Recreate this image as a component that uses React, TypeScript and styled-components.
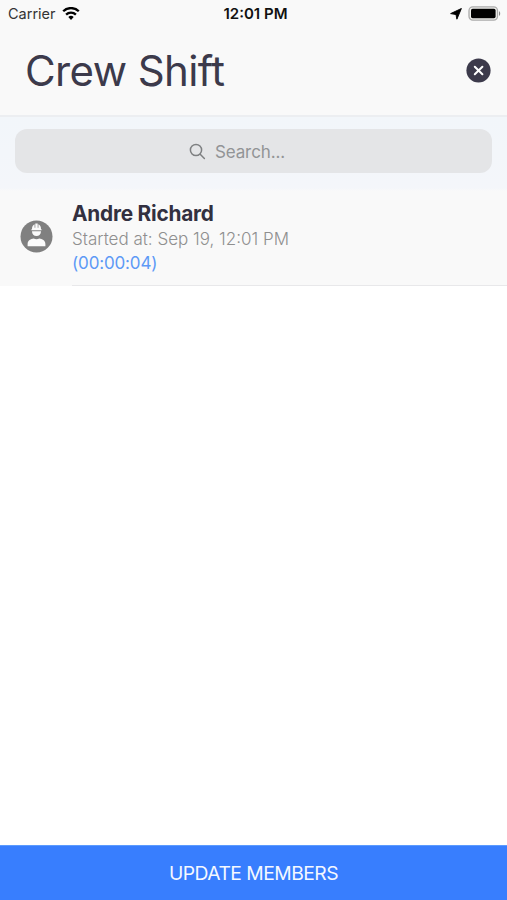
import React from 'react';
import styled, { createGlobalStyle } from 'styled-components';

const GlobalStyle = createGlobalStyle`
  * { box-sizing: border-box; }
  body { margin: 0; background: #fff; font-family: Inter, "Liberation Sans", sans-serif; }
`;

const Screen = styled.main`
  display: flex;
  flex-direction: column;
  height: 100vh;
  background: #fff;
`;

const Header = styled.header`
  height: 117px;
  background: #f9f9f9;
  border-bottom: 2px solid #eceef1;
`;

const StatusBar = styled.div`
  display: grid;
  grid-template-columns: 1fr auto 1fr;
  align-items: center;
  height: 28px;
  padding: 0 6px 0 8px;
  color: #111;
`;

const StatusGroup = styled.div<{ $end?: boolean }>`
  display: flex;
  align-items: center;
  justify-content: ${(p) => (p.$end ? 'flex-end' : 'flex-start')};
  gap: 6px;
`;

const Carrier = styled.span`
  font-size: 14.5px;
  line-height: 20px;
  color: #333;
`;

const Clock = styled.span`
  margin-left: 2px;
  font-size: 15px;
  line-height: 20px;
  font-weight: 600;
`;

const TitleBar = styled.div`
  display: flex;
  align-items: center;
  justify-content: space-between;
  height: 84px;
  padding: 0 16px 0 25px;
`;

const Title = styled.h1`
  margin: 2px 0 0;
  font-size: 42px;
  line-height: 50px;
  font-weight: 400;
  letter-spacing: -0.6px;
  color: #3c3a4b;
`;

const IconButton = styled.button`
  display: flex;
  padding: 0;
  border: 0;
  background: none;
`;

const SearchBar = styled.section`
  height: 74px;
  padding: 12px 15px;
  background: linear-gradient(#f2f6fa, #f4f6fa 96%, #f9f9f9);
`;

const SearchField = styled.div`
  display: flex;
  align-items: center;
  justify-content: center;
  gap: 9px;
  height: 44px;
  padding-right: 33px;
  border-radius: 12px;
  background: #e4e5e7;
`;

const Placeholder = styled.span`
  padding-top: 1px;
  font-size: 17px;
  line-height: 24px;
  letter-spacing: -0.1px;
  color: #929496;
`;

const MemberRow = styled.article`
  display: flex;
  height: 95px;
  padding-left: 20px;
  background: #f9f9f9;
`;

const Avatar = styled.svg`
  flex: none;
  margin: 29px 19px 0 0;
`;

const MemberInfo = styled.div`
  flex: 1;
  padding-top: 10px;
  border-bottom: 1px solid #e8e8ea;
`;

const MemberName = styled.h2`
  margin: 0;
  font-size: 20.8px;
  line-height: 26px;
  font-weight: 700;
  letter-spacing: -0.22px;
  color: #323040;
`;

const Started = styled.p`
  margin: 0;
  font-size: 17px;
  line-height: 24px;
  font-weight: 300;
  color: #8f8f8f;
`;

const Elapsed = styled.p`
  margin: 0;
  font-size: 17px;
  line-height: 24px;
  letter-spacing: -0.15px;
  color: #5d99f6;
`;

const UpdateButton = styled.button`
  height: 55px;
  margin-top: auto;
  padding: 0;
  border: 0;
  border-top: 1px solid #5b9bff;
  background: #387efe;
  color: #f4f8ff;
  font: 400 19.3px/54px Inter, "Liberation Sans", sans-serif;
  letter-spacing: -0.53px;
`;

const WifiIcon = () => (
  <svg width="18" height="14" viewBox="0 0 18 14" fill="none" stroke="#000" strokeWidth="2.3">
    <path d="M1.2 4.3a11 11 0 0 1 15.6 0" />
    <path d="M4.1 7.6a6.9 6.9 0 0 1 9.8 0" />
    <path d="M9 12.9 6.3 10.1a3.8 3.8 0 0 1 5.4 0Z" fill="#000" stroke="none" />
  </svg>
);

const LocationIcon = () => (
  <svg width="12" height="12" viewBox="0 0 12 12">
    <path d="M11.4.5 6.9 11.2 6 6.6.6 5.6Z" fill="#000" stroke="#000" strokeWidth=".9" strokeLinejoin="round" />
  </svg>
);

const BatteryIcon = () => (
  <svg width="33" height="16" viewBox="0 0 33 16">
    <rect x="1" y=".9" width="28.5" height="13.2" rx="3.8" fill="#f1f1ee" stroke="#aaa" strokeWidth="1.3" />
    <rect x="3" y="2.8" width="24.6" height="9.4" rx="1.6" fill="#000" />
    <path d="M31 5.3c1.6.6 1.6 4 0 4.7Z" fill="#888" />
  </svg>
);

const CloseIcon = () => (
  <svg width="25" height="25" viewBox="0 0 25 25">
    <circle cx="12.5" cy="12.5" r="12.1" fill="#3c3a4b" />
    <path d="m8.8 8.7 7.6 7.6m0-7.6-7.6 7.6" stroke="#fff" strokeWidth="2" strokeLinecap="round" />
  </svg>
);

const SearchIcon = () => (
  <svg width="17" height="17" viewBox="0 0 17 17" fill="none" stroke="#7e8082" strokeWidth="1.5" strokeLinecap="round">
    <circle cx="7" cy="7" r="5.6" />
    <path d="m11.2 11.2 4.2 4.3" />
  </svg>
);

const WorkerAvatar = () => (
  <Avatar width="33" height="33" viewBox="0 0 33 33">
    <circle cx="16.5" cy="16.5" r="16" fill="#808080" />
    <g fill="#fafafa">
      <path d="M12 9c0-2.4 1-4 2.6-4.7v3.5h.7V3.6h2.4v4.2h.7V4.3C20 5 21 6.6 21 9l.6.4v.9H11.400v-.9Z" />
      <path d="M12 11.300h9c0 3-1.800 4.700-4.500 4.700S12 14.300 12 11.300Z" />
      <path d="M7.600 26.300v-2.100c0-3.700 3.200-5.400 6.100-5.600 1.700.7 3.900.7 5.600 0 2.900.2 6.100 1.900 6.100 5.600v2.100Z" />
    </g>
  </Avatar>
);

export default function App() {
  return (
    <Screen>
      <GlobalStyle />
      <Header>
        <StatusBar>
          <StatusGroup>
            <Carrier>Carrier</Carrier>
            <WifiIcon />
          </StatusGroup>
          <Clock>12:01 PM</Clock>
          <StatusGroup $end>
            <LocationIcon />
            <BatteryIcon />
          </StatusGroup>
        </StatusBar>
        <TitleBar>
          <Title>Crew Shift</Title>
          <IconButton aria-label="Close">
            <CloseIcon />
          </IconButton>
        </TitleBar>
      </Header>
      <SearchBar>
        <SearchField>
          <SearchIcon />
          <Placeholder>Search...</Placeholder>
        </SearchField>
      </SearchBar>
      <MemberRow>
        <WorkerAvatar />
        <MemberInfo>
          <MemberName>Andre Richard</MemberName>
          <Started>Started at: Sep 19, 12:01 PM</Started>
          <Elapsed>(00:00:04)</Elapsed>
        </MemberInfo>
      </MemberRow>
      <UpdateButton>UPDATE MEMBERS</UpdateButton>
    </Screen>
  );
}
